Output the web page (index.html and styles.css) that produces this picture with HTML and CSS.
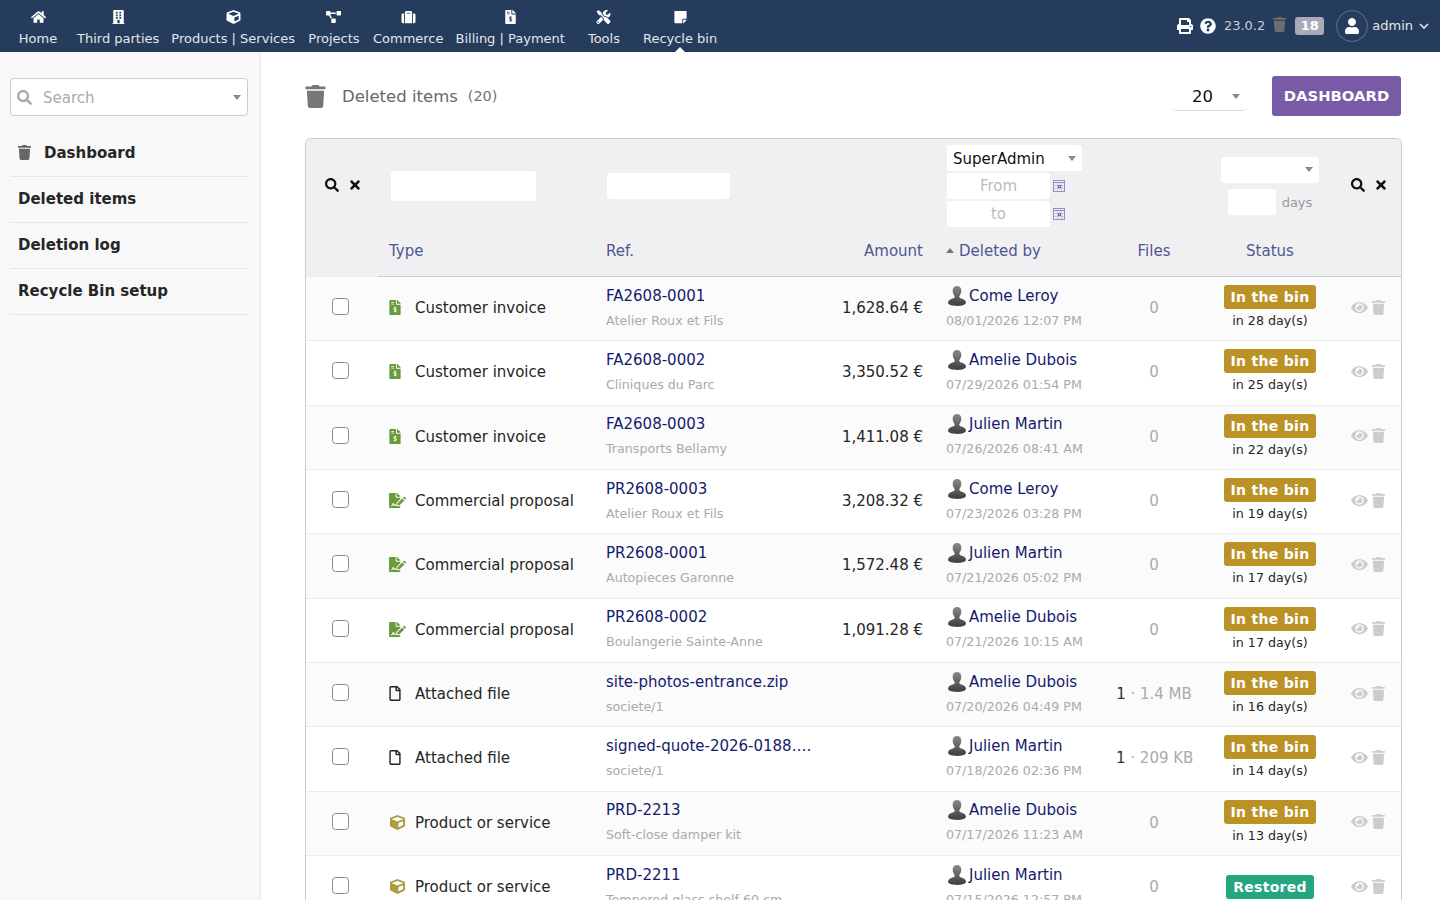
FILE: index.html
```html
<!DOCTYPE html>
<html lang="en">
<head>
    <meta charset="UTF-8">
    <title>Deleted items</title>
    <link rel="stylesheet" href="styles.css">
</head>
<body>
    <svg class="icon-defs" aria-hidden="true">
      <defs><linearGradient id="person-fill" x1="0" y1="0" x2="0" y2="1"><stop offset="0" stop-color="#8a8a8a"/><stop offset="1" stop-color="#3c3c3c"/></linearGradient></defs>
      <symbol id="i-home" viewBox="0 0 576 512"><path d="M280.37 148.26L96 300.11V464a16 16 0 0 0 16 16l112.06-.29a16 16 0 0 0 15.92-16V368a16 16 0 0 1 16-16h64a16 16 0 0 1 16 16v95.64a16 16 0 0 0 16 16.05L464 480a16 16 0 0 0 16-16V300L295.67 148.26a12.19 12.19 0 0 0-15.3 0zM571.6 251.47L488 182.56V44.05a12 12 0 0 0-12-12h-56a12 12 0 0 0-12 12v72.61L318.47 43a48 48 0 0 0-61 0L4.34 251.47a12 12 0 0 0-1.6 16.9l25.5 31A12 12 0 0 0 45.15 301l235.22-193.74a12.19 12.19 0 0 1 15.3 0L530.9 301a12 12 0 0 0 16.9-1.6l25.5-31a12 12 0 0 0-1.7-16.93z"/></symbol>
      <symbol id="i-building" viewBox="0 0 448 512"><path fill-rule="evenodd" d="M56 0h336c13 0 24 11 24 24v456h20c7 0 12 5 12 12v20H0v-20c0-7 5-12 12-12h20V24C32 11 43 0 56 0zM128 64v64h64V64zm128 0v64h64V64zM128 160v64h64v-64zm128 0v64h64v-64zM128 256v64h64v-64zm128 0v64h64v-64zM184 352v128h80V352z"/></symbol>
      <symbol id="i-cube" viewBox="0 0 512 512"><path d="M239.1 6.3l-208 78c-18.7 7-31.1 25-31.1 45v225.1c0 18.2 10.3 34.8 26.5 42.9l208 104c13.5 6.8 29.4 6.8 42.9 0l208-104c16.3-8.1 26.5-24.8 26.5-42.9V129.3c0-20-12.4-37.9-31.1-44.9l-208-78C262 2.2 250 2.2 239.1 6.3zM256 68.4l192 72v1.1l-192 78-192-78v-1.1l192-72zm32 356V275.5l160-65v133.9l-160 80z"/></symbol>
      <symbol id="i-diagram" viewBox="0 0 640 512"><path d="M384 320H256c-17.67 0-32 14.33-32 32v128c0 17.67 14.33 32 32 32h128c17.67 0 32-14.33 32-32V352c0-17.67-14.33-32-32-32zM192 32c0-17.67-14.33-32-32-32H32C14.33 0 0 14.33 0 32v128c0 17.67 14.33 32 32 32h95.72l73.16 128.04C211.98 300.98 232.4 288 256 288h.28L192 175.51V128h224V64H192V32zM608 0H480c-17.67 0-32 14.33-32 32v128c0 17.67 14.33 32 32 32h128c17.67 0 32-14.33 32-32V32c0-17.67-14.33-32-32-32z"/></symbol>
      <symbol id="i-suitcase" viewBox="0 0 512 512"><path d="M128 480h256V80c0-26.5-21.5-48-48-48H176c-26.5 0-48 21.5-48 48v400zm64-384h128v32H192V96zm320 80v256c0 26.5-21.5 48-48 48h-48V128h48c26.5 0 48 21.5 48 48zM96 480H48c-26.5 0-48-21.5-48-48V176c0-26.5 21.5-48 48-48h48v352z"/></symbol>
      <symbol id="i-invoice" viewBox="0 0 384 512"><path d="M377 105L279.1 7c-4.5-4.5-10.6-7-17-7H256v128h128v-6.1c0-6.3-2.5-12.4-7-16.9zM224 136V0H24C10.7 0 0 10.7 0 24v464c0 13.3 10.7 24 24 24h336c13.3 0 24-10.7 24-24V160H248c-13.2 0-24-10.8-24-24z"/><path class="hole" d="M64 64h96v28H64zM64 124h96v28H64z"/><path class="hole-line" d="M238 262h-60c-38 0-38 66 0 66h36c38 0 38 66 0 66h-64M196 232v192"/></symbol>
      <symbol id="i-tools" viewBox="0 0 512 512"><path d="M501.1 395.7L384 278.6c-23.1-23.1-57.6-27.6-85.4-13.9L192 158.1V96L64 0 0 64l96 128h62.1l106.6 106.6c-13.6 27.8-9.2 62.3 13.9 85.4l117.1 117.1c14.6 14.6 38.2 14.6 52.7 0l52.7-52.7c14.5-14.6 14.5-38.2 0-52.7zM331.7 225c28.3 0 54.9 11 74.9 31l19.4 19.4c15.8-6.9 30.8-16.5 43.8-29.5 37.1-37.1 49.7-89.3 37.9-136.7-2.2-9-13.5-12.1-20.1-5.5l-74.4 74.4-67.9-11.3L334 98.9l74.4-74.4c6.6-6.6 3.4-17.9-5.7-20.2-47.4-11.7-99.6.9-136.6 37.9-28.5 28.5-41.9 66.1-41.2 103.6l82.1 82.1c8.1-1.9 16.5-2.9 24.7-2.9zm-103.9 82l-56.7-56.7L18.7 402.8c-25 25-25 65.5 0 90.5s65.5 25 90.5 0l123.6-123.6c-7.6-19.9-9.9-41.6-5-62.7zM64 472c-13.2 0-24-10.8-24-24 0-13.3 10.7-24 24-24s24 10.7 24 24c0 13.2-10.7 24-24 24z"/></symbol>
      <symbol id="i-note" viewBox="0 0 448 512"><path d="M312 320h136V56c0-13.3-10.7-24-24-24H24C10.7 32 0 42.7 0 56v400c0 13.3 10.7 24 24 24h264V344c0-13.2 10.8-24 24-24zm129 55l-98 98c-4.5 4.5-10.6 7-17 7h-6V352h128v6.1c0 6.3-2.5 12.4-7 16.9z"/></symbol>
      <symbol id="i-print" viewBox="0 0 512 512"><path d="M448 192V77.25c0-8.49-3.37-16.62-9.37-22.63L393.37 9.37c-6-6-14.14-9.37-22.63-9.37H96C78.33 0 64 14.33 64 32v160c-35.35 0-64 28.65-64 64v112c0 8.84 7.16 16 16 16h48v96c0 17.67 14.33 32 32 32h320c17.67 0 32-14.33 32-32v-96h48c8.84 0 16-7.16 16-16V256c0-35.35-28.65-64-64-64zm-64 256H128v-96h256v96zm0-224H128V64h192v48c0 8.84 7.16 16 16 16h48v96zm48 72c-13.25 0-24-10.75-24-24 0-13.26 10.75-24 24-24s24 10.74 24 24c0 13.25-10.75 24-24 24z"/></symbol>
      <symbol id="i-help" viewBox="0 0 512 512"><path d="M504 256c0 136.997-111.043 248-248 248S8 392.997 8 256C8 119.083 119.043 8 256 8s248 111.083 248 248zM262.655 90c-54.497 0-89.255 22.957-116.549 63.758-3.536 5.286-2.353 12.415 2.715 16.258l34.699 26.31c5.205 3.947 12.621 3.008 16.665-2.122 17.864-22.658 30.113-35.797 57.303-35.797 20.429 0 45.698 13.148 45.698 32.958 0 14.976-12.363 22.667-32.534 33.976C247.128 238.528 216 254.941 216 296v4c0 6.627 5.373 12 12 12h56c6.627 0 12-5.373 12-12v-1.333c0-28.462 83.186-29.647 83.186-106.667 0-58.002-60.165-102-116.531-102zM256 338c-25.365 0-46 20.635-46 46 0 25.364 20.635 46 46 46s46-20.636 46-46c0-25.365-20.635-46-46-46z"/></symbol>
      <symbol id="i-trash" viewBox="0 0 448 512"><path d="M432 32H312l-9.4-18.7A24 24 0 0 0 281.1 0H166.8a23.72 23.72 0 0 0-21.4 13.3L136 32H16A16 16 0 0 0 0 48v32a16 16 0 0 0 16 16h416a16 16 0 0 0 16-16V48a16 16 0 0 0-16-16zM53.2 467a48 48 0 0 0 47.9 45h245.8a48 48 0 0 0 47.9-45L416 128H32z"/></symbol>
      <symbol id="i-search" viewBox="0 0 512 512"><path d="M505 442.7L405.3 343c-4.5-4.5-10.6-7-17-7H372c27.6-35.3 44-79.7 44-128C416 93.1 322.9 0 208 0S0 93.1 0 208s93.1 208 208 208c48.3 0 92.7-16.4 128-44v16.3c0 6.4 2.5 12.5 7 17l99.7 99.7c9.4 9.4 24.6 9.4 33.9 0l28.3-28.3c9.4-9.4 9.4-24.6.1-34zM208 336c-70.7 0-128-57.2-128-128 0-70.7 57.2-128 128-128 70.7 0 128 57.2 128 128 0 70.7-57.2 128-128 128z"/></symbol>
      <symbol id="i-times" viewBox="0 0 352 512"><path d="M242.72 256l100.07-100.07c12.28-12.28 12.28-32.19 0-44.48l-22.24-22.24c-12.28-12.28-32.19-12.28-44.48 0L176 189.28 75.93 89.21c-12.28-12.28-32.19-12.28-44.48 0L9.21 111.45c-12.28 12.28-12.28 32.19 0 44.48L109.28 256 9.21 356.07c-12.28 12.28-12.28 32.19 0 44.48l22.24 22.24c12.28 12.28 32.2 12.28 44.48 0L176 322.72l100.07 100.07c12.28 12.28 32.2 12.28 44.48 0l22.24-22.24c12.28-12.28 12.28-32.19 0-44.48L242.72 256z"/></symbol>
      <symbol id="i-eye" viewBox="0 0 576 512"><path d="M572.52 241.4C518.29 135.59 410.93 64 288 64S57.68 135.64 3.48 241.41a32.35 32.35 0 0 0 0 29.19C57.71 376.41 165.07 448 288 448s230.32-71.64 284.52-177.41a32.35 32.35 0 0 0 0-29.19zM288 400a144 144 0 1 1 144-144 143.93 143.93 0 0 1-144 144zm0-240a95.31 95.31 0 0 0-25.31 3.79 47.85 47.85 0 0 1-66.9 66.9A95.78 95.78 0 1 0 288 160z"/></symbol>
      <symbol id="i-proposal" viewBox="0 0 576 512"><path d="M218.17 424.14c-2.95-5.92-8.09-6.52-10.17-6.52s-7.22.59-10.02 6.19l-7.67 15.34c-6.37 12.78-25.03 11.37-29.48-2.09L144 386.59l-10.61 31.88c-5.89 17.66-22.38 29.53-41 29.53H80c-8.84 0-16-7.16-16-16s7.16-16 16-16h12.39c4.83 0 9.11-3.08 10.64-7.66l18.19-54.64c3.3-9.81 12.44-16.41 22.78-16.41s19.48 6.59 22.77 16.41l13.88 41.64c19.75-16.19 54.06-9.7 66 14.16 1.89 3.78 5.49 5.95 9.36 6.26v-82.12l128-127.09V160H248c-13.2 0-24-10.8-24-24V0H24C10.7 0 0 10.7 0 24v464c0 13.3 10.7 24 24 24h336c13.3 0 24-10.7 24-24v-40l-128-.11c-16.12-.31-30.58-9.28-37.83-23.75zM384 121.9c0-6.3-2.5-12.4-7-16.9L279.1 7c-4.5-4.5-10.6-7-17-7H256v128h128v-6.1zm-96 225.06V416h68.99l161.68-162.78-67.88-67.88L288 346.96zm280.54-179.63l-31.87-31.87c-9.94-9.94-26.07-9.94-36.01 0l-27.25 27.25 67.88 67.88 27.25-27.25c9.95-9.94 9.95-26.07 0-36.01z"/></symbol>
      <symbol id="i-file" viewBox="0 0 384 512"><path d="M369.9 97.9L286 14C277 5 264.8-.1 252.1-.1H48C21.5 0 0 21.5 0 48v416c0 26.5 21.5 48 48 48h288c26.5 0 48-21.5 48-48V131.9c0-12.7-5.1-25-14.1-34zM332.1 128H256V51.9l76.1 76.1zM48 464V48h160v104c0 13.3 10.7 24 24 24h104v288H48z"/></symbol>
      <symbol id="i-user" viewBox="0 0 448 512"><path d="M224 256c70.7 0 128-57.3 128-128S294.7 0 224 0 96 57.3 96 128s57.3 128 128 128zm89.6 32h-16.7c-22.2 10.2-46.9 16-72.9 16s-50.6-5.8-72.9-16h-16.7C60.2 288 0 348.2 0 422.4V464c0 26.5 21.5 48 48 48h352c26.5 0 48-21.5 48-48v-41.6c0-74.2-60.2-134.4-134.4-134.4z"/></symbol>
      <symbol id="i-person" viewBox="0 0 20 22"><path fill="url(#person-fill)" d="M10 0c3 0 4.800 2.200 4.800 5.200 0 2.400-1 4.600-2.300 6 0 1.400.8 2 2.500 2.700 2.500 1 5 2 5 4.600 0 2.300-5 3.500-10 3.500S0 20.800 0 18.500c0-2.600 2.500-3.600 5-4.600 1.700-.7 2.500-1.300 2.500-2.700-1.300-1.400-2.300-3.600-2.300-6C5.200 2.200 7 0 10 0z"/></symbol>
      <symbol id="i-calendar" viewBox="0 0 12 12"><path fill="#eeecf6" d="M0 0h12v12H0z"/><path fill="#c9c9d2" d="M4 3h1v9H4zM8 3h1v9H8zM1 5h10v1H1zM1 8h10v1H1z"/><path fill="#9b8cc4" d="M0 0h12v1H0zM0 11h12v1H0zM0 0h1v12H0zM11 0h1v12h-1zM1 2h10v1H1z"/><path fill="#7a5fa8" d="M5 5h3v3H5z"/><path fill="#eeecf6" d="M6 6h1v1H6z"/></symbol>
    </svg>

    <header class="topbar">
      <nav class="topmenu">
        <a class="topmenu-item"><svg class="topmenu-icon"><use href="#i-home"/></svg><span>Home</span></a>
        <a class="topmenu-item"><svg class="topmenu-icon"><use href="#i-building"/></svg><span>Third parties</span></a>
        <a class="topmenu-item"><svg class="topmenu-icon"><use href="#i-cube"/></svg><span>Products | Services</span></a>
        <a class="topmenu-item"><svg class="topmenu-icon"><use href="#i-diagram"/></svg><span>Projects</span></a>
        <a class="topmenu-item"><svg class="topmenu-icon"><use href="#i-suitcase"/></svg><span>Commerce</span></a>
        <a class="topmenu-item"><svg class="topmenu-icon"><use href="#i-invoice"/></svg><span>Billing | Payment</span></a>
        <a class="topmenu-item"><svg class="topmenu-icon"><use href="#i-tools"/></svg><span>Tools</span></a>
        <a class="topmenu-item active"><svg class="topmenu-icon"><use href="#i-note"/></svg><span>Recycle bin</span></a>
      </nav>
      <div class="topright">
        <svg class="top-print"><use href="#i-print"/></svg>
        <svg class="top-help"><use href="#i-help"/></svg>
        <span class="top-version">23.0.2</span>
        <svg class="top-trash"><use href="#i-trash"/></svg>
        <span class="top-badge">18</span>
        <span class="top-avatar"><svg><use href="#i-user"/></svg></span>
        <span class="top-login">admin</span>
        <svg class="top-chevron" viewBox="0 0 10 6"><path d="M1 1l4 4 4-4"/></svg>
      </div>
    </header>

    <div class="page">
      <aside class="sidebar">
        <div class="side-search">
          <svg class="side-search-icon"><use href="#i-search"/></svg>
          <span class="side-search-text">Search</span>
          <span class="caret"></span>
        </div>
        <ul class="side-menu">
          <li><svg class="side-trash"><use href="#i-trash"/></svg>Dashboard</li>
          <li>Deleted items</li>
          <li>Deletion log</li>
          <li>Recycle Bin setup</li>
        </ul>
      </aside>

      <main class="content">
        <div class="title-row">
          <svg class="title-icon"><use href="#i-trash"/></svg>
          <h1 class="title-text">Deleted items</h1>
          <span class="title-count">(20)</span>
          <div class="page-size"><span>20</span><span class="caret"></span></div>
          <a class="btn-dashboard">DASHBOARD</a>
        </div>

        <div class="table-box">
          <table class="list">
            <colgroup>
              <col class="c-check"><col class="c-type"><col class="c-ref"><col class="c-amount"><col class="c-by"><col class="c-files"><col class="c-status"><col class="c-actions">
            </colgroup>
            <thead>
              <tr class="filter-row">
                <th class="filter-tools"><svg class="ft-search"><use href="#i-search"/></svg><svg class="ft-times"><use href="#i-times"/></svg></th>
                <th><input class="filter-input f-type" type="text"></th>
                <th><input class="filter-input f-ref" type="text"></th>
                <th></th>
                <th>
                  <div class="filter-stack">
                    <div class="filter-select f-user"><span>SuperAdmin</span><span class="caret"></span></div>
                    <div class="date-line"><input class="filter-input f-date" type="text" placeholder="From"><svg class="cal"><use href="#i-calendar"/></svg></div>
                    <div class="date-line"><input class="filter-input f-date" type="text" placeholder="to"><svg class="cal"><use href="#i-calendar"/></svg></div>
                  </div>
                </th>
                <th></th>
                <th>
                  <div class="filter-stack f-status-stack">
                    <div class="filter-select f-status"><span class="caret"></span></div>
                    <div class="days-line"><input class="filter-input f-days" type="text"><span class="days">days</span></div>
                  </div>
                </th>
                <th class="filter-tools right"><svg class="ft-search"><use href="#i-search"/></svg><svg class="ft-times"><use href="#i-times"/></svg></th>
              </tr>
              <tr class="title-cols">
                <th class="blank"></th>
                <th>Type</th>
                <th>Ref.</th>
                <th class="num">Amount</th>
                <th class="by"><span class="sort-up"></span>Deleted by</th>
                <th class="mid">Files</th>
                <th class="mid">Status</th>
                <th></th>
              </tr>
            </thead>
            <tbody>
              <tr>
                <td class="chk"><span class="checkbox"></span></td>
                <td class="type"><svg class="type-icon green"><use href="#i-invoice"/></svg>Customer invoice</td>
                <td><a class="ref">FA2608-0001</a><span class="sub">Atelier Roux et Fils</span></td>
                <td class="num">1,628.64 €</td>
                <td class="by"><span class="who"><svg class="person"><use href="#i-person"/></svg>Come Leroy</span><span class="sub">08/01/2026 12:07 PM</span></td>
                <td class="mid zero">0</td>
                <td class="mid"><span class="status bin">In the bin</span><span class="left">in 28 day(s)</span></td>
                <td class="acts"><svg class="a-eye"><use href="#i-eye"/></svg><svg class="a-trash"><use href="#i-trash"/></svg></td>
              </tr>
              <tr>
                <td class="chk"><span class="checkbox"></span></td>
                <td class="type"><svg class="type-icon green"><use href="#i-invoice"/></svg>Customer invoice</td>
                <td><a class="ref">FA2608-0002</a><span class="sub">Cliniques du Parc</span></td>
                <td class="num">3,350.52 €</td>
                <td class="by"><span class="who"><svg class="person"><use href="#i-person"/></svg>Amelie Dubois</span><span class="sub">07/29/2026 01:54 PM</span></td>
                <td class="mid zero">0</td>
                <td class="mid"><span class="status bin">In the bin</span><span class="left">in 25 day(s)</span></td>
                <td class="acts"><svg class="a-eye"><use href="#i-eye"/></svg><svg class="a-trash"><use href="#i-trash"/></svg></td>
              </tr>
              <tr>
                <td class="chk"><span class="checkbox"></span></td>
                <td class="type"><svg class="type-icon green"><use href="#i-invoice"/></svg>Customer invoice</td>
                <td><a class="ref">FA2608-0003</a><span class="sub">Transports Bellamy</span></td>
                <td class="num">1,411.08 €</td>
                <td class="by"><span class="who"><svg class="person"><use href="#i-person"/></svg>Julien Martin</span><span class="sub">07/26/2026 08:41 AM</span></td>
                <td class="mid zero">0</td>
                <td class="mid"><span class="status bin">In the bin</span><span class="left">in 22 day(s)</span></td>
                <td class="acts"><svg class="a-eye"><use href="#i-eye"/></svg><svg class="a-trash"><use href="#i-trash"/></svg></td>
              </tr>
              <tr>
                <td class="chk"><span class="checkbox"></span></td>
                <td class="type"><svg class="type-icon green wide"><use href="#i-proposal"/></svg>Commercial proposal</td>
                <td><a class="ref">PR2608-0003</a><span class="sub">Atelier Roux et Fils</span></td>
                <td class="num">3,208.32 €</td>
                <td class="by"><span class="who"><svg class="person"><use href="#i-person"/></svg>Come Leroy</span><span class="sub">07/23/2026 03:28 PM</span></td>
                <td class="mid zero">0</td>
                <td class="mid"><span class="status bin">In the bin</span><span class="left">in 19 day(s)</span></td>
                <td class="acts"><svg class="a-eye"><use href="#i-eye"/></svg><svg class="a-trash"><use href="#i-trash"/></svg></td>
              </tr>
              <tr>
                <td class="chk"><span class="checkbox"></span></td>
                <td class="type"><svg class="type-icon green wide"><use href="#i-proposal"/></svg>Commercial proposal</td>
                <td><a class="ref">PR2608-0001</a><span class="sub">Autopieces Garonne</span></td>
                <td class="num">1,572.48 €</td>
                <td class="by"><span class="who"><svg class="person"><use href="#i-person"/></svg>Julien Martin</span><span class="sub">07/21/2026 05:02 PM</span></td>
                <td class="mid zero">0</td>
                <td class="mid"><span class="status bin">In the bin</span><span class="left">in 17 day(s)</span></td>
                <td class="acts"><svg class="a-eye"><use href="#i-eye"/></svg><svg class="a-trash"><use href="#i-trash"/></svg></td>
              </tr>
              <tr>
                <td class="chk"><span class="checkbox"></span></td>
                <td class="type"><svg class="type-icon green wide"><use href="#i-proposal"/></svg>Commercial proposal</td>
                <td><a class="ref">PR2608-0002</a><span class="sub">Boulangerie Sainte-Anne</span></td>
                <td class="num">1,091.28 €</td>
                <td class="by"><span class="who"><svg class="person"><use href="#i-person"/></svg>Amelie Dubois</span><span class="sub">07/21/2026 10:15 AM</span></td>
                <td class="mid zero">0</td>
                <td class="mid"><span class="status bin">In the bin</span><span class="left">in 17 day(s)</span></td>
                <td class="acts"><svg class="a-eye"><use href="#i-eye"/></svg><svg class="a-trash"><use href="#i-trash"/></svg></td>
              </tr>
              <tr>
                <td class="chk"><span class="checkbox"></span></td>
                <td class="type"><svg class="type-icon dark"><use href="#i-file"/></svg>Attached file</td>
                <td><a class="ref">site-photos-entrance.zip</a><span class="sub">societe/1</span></td>
                <td class="num"></td>
                <td class="by"><span class="who"><svg class="person"><use href="#i-person"/></svg>Amelie Dubois</span><span class="sub">07/20/2026 04:49 PM</span></td>
                <td class="mid zero"><span class="file-count">1</span> · 1.4 MB</td>
                <td class="mid"><span class="status bin">In the bin</span><span class="left">in 16 day(s)</span></td>
                <td class="acts"><svg class="a-eye"><use href="#i-eye"/></svg><svg class="a-trash"><use href="#i-trash"/></svg></td>
              </tr>
              <tr>
                <td class="chk"><span class="checkbox"></span></td>
                <td class="type"><svg class="type-icon dark"><use href="#i-file"/></svg>Attached file</td>
                <td><a class="ref">signed-quote-2026-0188.…</a><span class="sub">societe/1</span></td>
                <td class="num"></td>
                <td class="by"><span class="who"><svg class="person"><use href="#i-person"/></svg>Julien Martin</span><span class="sub">07/18/2026 02:36 PM</span></td>
                <td class="mid zero"><span class="file-count">1</span> · 209 KB</td>
                <td class="mid"><span class="status bin">In the bin</span><span class="left">in 14 day(s)</span></td>
                <td class="acts"><svg class="a-eye"><use href="#i-eye"/></svg><svg class="a-trash"><use href="#i-trash"/></svg></td>
              </tr>
              <tr>
                <td class="chk"><span class="checkbox"></span></td>
                <td class="type"><svg class="type-icon gold wide"><use href="#i-cube"/></svg>Product or service</td>
                <td><a class="ref">PRD-2213</a><span class="sub">Soft-close damper kit</span></td>
                <td class="num"></td>
                <td class="by"><span class="who"><svg class="person"><use href="#i-person"/></svg>Amelie Dubois</span><span class="sub">07/17/2026 11:23 AM</span></td>
                <td class="mid zero">0</td>
                <td class="mid"><span class="status bin">In the bin</span><span class="left">in 13 day(s)</span></td>
                <td class="acts"><svg class="a-eye"><use href="#i-eye"/></svg><svg class="a-trash"><use href="#i-trash"/></svg></td>
              </tr>
              <tr>
                <td class="chk"><span class="checkbox"></span></td>
                <td class="type"><svg class="type-icon gold wide"><use href="#i-cube"/></svg>Product or service</td>
                <td><a class="ref">PRD-2211</a><span class="sub">Tempered glass shelf 60 cm</span></td>
                <td class="num"></td>
                <td class="by"><span class="who"><svg class="person"><use href="#i-person"/></svg>Julien Martin</span><span class="sub">07/15/2026 12:57 PM</span></td>
                <td class="mid zero">0</td>
                <td class="mid"><span class="status restored">Restored</span></td>
                <td class="acts"><svg class="a-eye"><use href="#i-eye"/></svg><svg class="a-trash"><use href="#i-trash"/></svg></td>
              </tr>
            </tbody>
          </table>
        </div>
      </main>
    </div>
</body>
</html>
```

FILE: styles.css
```css
html, body {
  height: 100%;
  margin: 0;
  overflow: hidden;
}

body {
  display: flex;
  flex-direction: column;
  font-family: "DejaVu Sans", sans-serif;
  font-size: 15px;
  color: #262626;
  background: #fff;
}

.icon-defs {
  flex: none;
  width: 0;
  height: 0;
}

svg {
  fill: currentColor;
}

.hole {
  fill: var(--hole, #fff);
}

.hole-line {
  fill: none;
  stroke: var(--hole, #fff);
  stroke-width: 30;
}

.caret {
  width: 0;
  height: 0;
  border-left: 4px solid transparent;
  border-right: 4px solid transparent;
  border-top: 5px solid #888;
}

/* top menu */
.topbar {
  display: flex;
  flex: none;
  justify-content: space-between;
  height: 52px;
  background: #253c5d;
  color: #f0f0f0;
}

.topmenu {
  display: flex;
  padding-left: 5px;
}

.topmenu-item {
  position: relative;
  display: flex;
  flex-direction: column;
  align-items: center;
  box-sizing: border-box;
  min-width: 66px;
  height: 52px;
  padding: 10px 6px 0;
  font-size: 13px;
  color: #e3e6ea;
  white-space: nowrap;
}

.topmenu-icon {
  width: 15px;
  height: 14px;
  margin-bottom: 7px;
  color: #fff;
  --hole: #253c5d;
}

.topmenu-item span {
  line-height: 16px;
}

.topmenu-item.active::after {
  content: "";
  position: absolute;
  left: 50%;
  bottom: 0;
  margin-left: -5px;
  border-left: 5px solid transparent;
  border-right: 5px solid transparent;
  border-bottom: 5px solid #fff;
}

.topright {
  display: flex;
  align-items: center;
  padding-right: 11px;
}

.top-print {
  width: 16px;
  height: 16px;
  color: #fff;
}

.top-help {
  width: 16px;
  height: 16px;
  margin-left: 7px;
  color: #fff;
}

.top-version {
  margin: 0 0 2px 8px;
  font-size: 13px;
  color: #c9ced6;
}

.top-trash {
  width: 13px;
  height: 15px;
  margin: -3px 0 0 8px;
  color: #6d6d6d;
}

.top-badge {
  box-sizing: border-box;
  width: 29px;
  height: 18px;
  margin-left: 9px;
  border-radius: 3px;
  background: #a9a9b9;
  color: #fff;
  font-size: 13px;
  font-weight: bold;
  line-height: 18px;
  text-align: center;
}

.top-avatar {
  display: flex;
  align-items: center;
  justify-content: center;
  box-sizing: border-box;
  width: 32px;
  height: 32px;
  margin-left: 12px;
  border: 1px solid #5f7088;
  border-radius: 50%;
}

.top-avatar svg {
  width: 14px;
  height: 16px;
  color: #fff;
}

.top-login {
  margin: 0 0 2px 4px;
  font-size: 13px;
  color: #e3e6ea;
}

.top-chevron {
  width: 10px;
  height: 6px;
  margin-left: 6px;
  fill: none;
  stroke: #e3e6ea;
  stroke-width: 1.6;
}

/* page columns */
.page {
  display: flex;
  flex: 1;
  min-height: 0;
}

.sidebar {
  box-sizing: border-box;
  flex: none;
  width: 261px;
  padding: 26px 12px 0 10px;
  background: #f8f8f8;
  border-right: 1px solid #e8e8e8;
}

.side-search {
  display: flex;
  align-items: center;
  box-sizing: border-box;
  height: 38px;
  padding: 0 6px;
  background: #fff;
  border: 1px solid #ccc;
  border-radius: 4px;
}

.side-search-icon {
  width: 15px;
  height: 15px;
  color: #aaa;
}

.side-search-text {
  flex: 1;
  margin: 2px 0 0 11px;
  font-size: 15px;
  color: #aaa;
}

.side-menu {
  margin: 15px 0 0;
  padding: 0;
  list-style: none;
}

.side-menu li {
  display: flex;
  align-items: center;
  box-sizing: border-box;
  height: 46px;
  padding: 0 0 2px 8px;
  border-bottom: 1px solid #e6e6e6;
  font-size: 15px;
  font-weight: bold;
}

.side-trash {
  width: 13px;
  height: 15px;
  margin-right: 13px;
  color: #666;
}

/* main column */
.content {
  flex: 1;
  min-width: 0;
  padding: 24px 39px 0 44px;
}

.title-row {
  display: flex;
  align-items: center;
  height: 40px;
  margin-bottom: 22px;
}

.title-icon {
  width: 21px;
  height: 23px;
  color: #777;
}

.title-text {
  margin: 0 0 0 16px;
  font-size: 16.5px;
  font-weight: normal;
  color: #5f6b6b;
}

.title-count {
  margin-left: 10px;
  font-size: 14.4px;
  color: #6c7474;
}

.page-size {
  display: flex;
  align-items: center;
  justify-content: space-between;
  box-sizing: border-box;
  width: 74px;
  height: 29px;
  margin: 0 25px 0 auto;
  padding: 2px 7px 0 19px;
  border-bottom: 1px solid #ddd;
  border-radius: 4px;
  font-size: 16.5px;
  color: #111;
}

.btn-dashboard {
  display: block;
  box-sizing: border-box;
  width: 129px;
  height: 40px;
  border-radius: 3px;
  background: #775ba6;
  color: #fff;
  font-size: 14.8px;
  font-weight: bold;
  line-height: 40px;
  text-align: center;
}

.table-box {
  box-sizing: border-box;
  width: 1097px;
  border: 1px solid #ccc;
  border-bottom: 0;
  border-radius: 6px 6px 0 0;
  overflow: hidden;
}

.list {
  width: 1095px;
  table-layout: fixed;
  border-collapse: separate;
  border-spacing: 0;
}

.c-check { width: 72px; }
.c-type { width: 217px; }
.c-ref { width: 240px; }
.c-amount { width: 99px; }
.c-by { width: 171px; }
.c-files { width: 98px; }
.c-status { width: 134px; }
.c-actions { width: 64px; }

thead th {
  background: #f0f0f3;
  padding: 0 11px;
  font-weight: normal;
  text-align: left;
}

.filter-row th {
  box-sizing: border-box;
  height: 93px;
  vertical-align: middle;
}

.filter-tools {
  white-space: nowrap;
}

.filter-row .filter-tools {
  padding: 0 0 2px 19px;
}

.filter-row .filter-tools.right {
  padding-left: 14px;
}

.filter-row th:nth-child(2) {
  padding-left: 13px;
}

.filter-row th:nth-child(3) {
  padding-left: 12px;
}

.ft-search {
  width: 14px;
  height: 14px;
  color: #111;
  vertical-align: middle;
}

.ft-times {
  width: 10px;
  height: 14px;
  margin-left: 11px;
  color: #111;
  vertical-align: middle;
}

.filter-input {
  display: block;
  box-sizing: border-box;
  padding: 0;
  border: 0;
  border-radius: 3px;
  background: #fff;
  font-family: inherit;
  font-size: 15px;
  text-align: center;
}

.filter-input::placeholder {
  color: #bbb;
}

.f-type {
  width: 145px;
  height: 30px;
}

.f-ref {
  width: 123px;
  height: 26px;
}

.filter-stack {
  display: flex;
  flex-direction: column;
  gap: 2px;
  margin-left: 2px;
}

.filter-select {
  display: flex;
  align-items: center;
  justify-content: space-between;
  box-sizing: border-box;
  height: 26px;
  padding: 0 6px;
  border-radius: 3px;
  background: #fff;
  font-size: 15px;
  color: #111;
}

.f-user {
  width: 135px;
  padding-top: 2px;
}

.date-line {
  display: flex;
  align-items: center;
}

.f-date {
  width: 103px;
  height: 26px;
}

.cal {
  width: 12px;
  height: 12px;
  margin-left: 3px;
}

.f-status-stack {
  align-items: center;
  gap: 6px;
  margin-left: 0;
}

.f-status {
  justify-content: flex-end;
  width: 98px;
}

.days-line {
  display: flex;
  align-items: center;
}

.f-days {
  width: 48px;
  height: 26px;
}

.days {
  margin: 2px 0 0 6px;
  font-size: 13px;
  color: #999;
}

.title-cols th {
  height: 45px;
  padding-bottom: 7px;
  box-sizing: border-box;
  border-bottom: 1px solid #ccc;
  color: #4f5690;
}

.title-cols .blank {
  border-bottom: 0;
}

.sort-up {
  display: inline-block;
  width: 0;
  height: 0;
  margin-right: 5px;
  vertical-align: 3px;
  border-left: 4.5px solid transparent;
  border-right: 4.5px solid transparent;
  border-bottom: 5px solid #777;
}

/* rows */
tbody tr:nth-child(odd) td {
  background: #fbfbfb;
}

tbody td {
  box-sizing: border-box;
  height: 64.33px;
  padding: 0 11px;
  border-bottom: 1px solid #ececec;
  vertical-align: middle;
  white-space: nowrap;
}

tbody td.type,
tbody td.num,
tbody td.zero {
  padding-bottom: 1px;
}

thead th.num,
tbody td.num {
  padding-left: 0;
  padding-right: 11px;
  text-align: right;
}

thead th.by,
tbody td.by {
  padding-left: 12px;
}

th.mid,
.mid {
  text-align: center;
}

tbody td.chk {
  padding-bottom: 5px;
  text-align: center;
}

.checkbox {
  display: inline-block;
  box-sizing: border-box;
  width: 17px;
  height: 17px;
  margin-left: -3px;
  vertical-align: middle;
  background: #fff;
  border: 1.5px solid #8a8a8a;
  border-radius: 3.5px;
}

.type-icon {
  width: 12px;
  height: 15px;
  margin-right: 14px;
  vertical-align: -2px;
}

.type-icon.wide {
  width: 17px;
  margin-right: 9px;
}

.green { color: #6a9a3c; }
.gold { color: #ad9b46; }
.dark { color: #222; }

.ref,
.who {
  display: block;
  line-height: 24px;
  color: #141a6b;
}

.sub {
  display: block;
  margin: 3px 0;
  font-size: 12.65px;
  line-height: 20px;
  color: #aaa;
}

.person {
  width: 18px;
  height: 20px;
  margin: 0 3px 0 2px;
  vertical-align: -5px;
}

.zero {
  color: #aaa;
}

.file-count {
  color: #333;
}

.status {
  display: inline-block;
  box-sizing: border-box;
  height: 24px;
  padding: 0 7px;
  border-radius: 3px;
  color: #fff;
  font-size: 14px;
  font-weight: bold;
  line-height: 24px;
  letter-spacing: .3px;
}

.status.bin {
  background: #bb9225;
}

.status.restored {
  margin-bottom: 2px;
  background: #25a580;
}

.left {
  display: block;
  margin: 2px 0 1px;
  font-size: 12.65px;
  line-height: 20px;
}

.acts {
  color: #ccc;
}

tbody td.acts {
  padding: 0 0 4px 14px;
}

.a-eye {
  width: 17px;
  height: 15px;
  vertical-align: middle;
}

.a-trash {
  width: 13px;
  height: 15px;
  margin-left: 4px;
  vertical-align: middle;
}
```
